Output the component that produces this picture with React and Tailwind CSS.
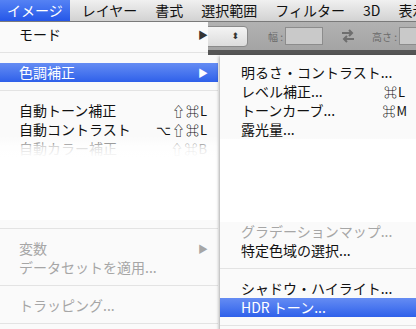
import React from 'react';

const font = "font-['Noto_Sans_CJK_JP','DejaVu_Sans',sans-serif]";

const Sep = () => (
    <div className="h-[19px] pt-[8px]">
        <div className="h-px bg-[#e3e3e3]"></div>
    </div>
);

const Row = ({ label, shortcut, arrow, disabled, active, pl = 'pl-[19px]', pr = 'pr-[10px]' }) => (
    <div
        className={`h-[19px] flex items-center justify-between ${pl} ${pr} text-[14px] leading-[19px] ${
            active
                ? 'bg-gradient-to-b from-[#658cf3] to-[#2f60ea] text-white'
                : disabled
                ? 'text-[#a6a6a6]'
                : 'text-[#111]'
        }`}
    >
        <span className="whitespace-nowrap">{label}</span>
        {shortcut && <span className="whitespace-nowrap text-[13px] tracking-[1px]">{shortcut}</span>}
        {arrow && (
            <span className={`text-[10px] ${active ? 'text-white' : disabled ? 'text-[#a6a6a6]' : 'text-[#333]'}`}>▶</span>
        )}
    </div>
);

const App = () => {
    const bar = ['レイヤー', '書式', '選択範囲', 'フィルター', '3D', '表示'];

    return (
        <div className={`relative w-[416px] h-[329px] overflow-hidden bg-white ${font}`}>
            {/* --- MENU BAR --- */}
            <div className="h-[22px] flex items-stretch bg-gradient-to-b from-[#f0f0f0] to-[#d2d2d2] border-b border-[#7a7a7a] text-[14px] text-[#111] whitespace-nowrap">
                <div className="shrink-0 px-[7px] flex items-center bg-gradient-to-b from-[#5582f4] to-[#2556e8] text-white">イメージ</div>
                <div className="flex items-center gap-[18px] pl-[12px]">
                    {bar.map((b) => (
                        <span key={b} className="shrink-0">{b}</span>
                    ))}
                </div>
            </div>

            {/* --- OPTIONS BAR --- */}
            <div className="h-[28px] flex items-center bg-gradient-to-b from-[#b2b2b2] to-[#a4a4a4] pl-[150px] text-[10px] text-[#6a6a6a] whitespace-nowrap">
                <div className="shrink-0 w-[98px] h-[21px] rounded-[4px] bg-gradient-to-b from-[#f4f4f4] to-[#dcdcdc] border border-[#8a8a8a] flex items-center justify-end pr-[8px] text-[9px] text-[#333]">
                    ⬍
                </div>
                <span className="shrink-0 ml-[20px] w-[17px]">幅 :</span>
                <div className="shrink-0 w-[38px] h-[18px] bg-[#c9c9c9] border border-[#8c8c8c]"></div>
                <svg className="shrink-0 ml-[17px]" width="16" height="14" viewBox="0 0 16 14">
                    <path d="M2 4h10M9 1l3 3-3 3M14 10H4M7 7l-3 3 3 3" fill="none" stroke="#6e6e6e" strokeWidth="2" />
                </svg>
                <span className="shrink-0 ml-[16px] w-[27px]">高さ :</span>
                <div className="shrink-0 w-[30px] h-[18px] bg-[#c9c9c9] border border-[#8c8c8c]"></div>
            </div>
            <div className="h-[5px] bg-[#565656]"></div>

            {/* --- MAIN MENU --- */}
            <div className="absolute left-0 top-[22px] w-[218px] h-[320px] bg-[#fafafa] pt-[3px] shadow-[1px_0_2px_rgba(0,0,0,0.35)] [clip-path:polygon(0_0,208px_0,208px_33px,100%_33px,100%_100%,0_100%)]">
                <Row label="モード" arrow />
                <Sep />
                <Row label="色調補正" arrow active />
                <Sep />
                <Row label="自動トーン補正" shortcut="⇧⌘L" />
                <Row label="自動コントラスト" shortcut="⌥⇧⌘L" />
                <Row label="自動カラー補正" shortcut="⇧⌘B" />
                <div className="h-[62px] bg-white"></div>
                <Sep />
                <Row label="変数" arrow disabled />
                <Row label="データセットを適用..." disabled />
                <Sep />
                <Row label="トラッピング..." disabled />
                <Sep />
                <div className="absolute left-0 right-0 top-[114px] h-[22px] bg-gradient-to-b from-white/0 via-white/85 to-white"></div>
                <div className="absolute left-0 right-0 top-[136px] h-[62px] bg-white"></div>
            </div>

            {/* --- ADJUSTMENTS SUBMENU --- */}
            <div className="absolute left-[220px] top-[55px] w-[200px] h-[280px] bg-[#fafafa] pt-[8px] shadow-[-1px_1px_3px_rgba(0,0,0,0.35)]">
                <Row label="明るさ・コントラスト..." pl="pl-[21px]" pr="pr-[14px]" />
                <Row label="レベル補正..." shortcut="⌘L" pl="pl-[21px]" pr="pr-[14px]" />
                <Row label="トーンカーブ..." shortcut="⌘M" pl="pl-[21px]" pr="pr-[12px]" />
                <Row label="露光量..." pl="pl-[21px]" pr="pr-[14px]" />
                <div className="h-[83px] bg-white"></div>
                <Row label="グラデーションマップ..." disabled pl="pl-[21px]" pr="pr-[14px]" />
                <Row label="特定色域の選択..." pl="pl-[21px]" pr="pr-[14px]" />
                <Sep />
                <Row label="シャドウ・ハイライト..." pl="pl-[21px]" pr="pr-[14px]" />
                <Row label="HDR トーン..." active pl="pl-[21px]" pr="pr-[14px]" />
                <Sep />
                <div className="absolute left-0 right-0 top-[82px] h-[20px] bg-gradient-to-b from-white/0 via-white/85 to-white"></div>
            </div>
        </div>
    );
};

export default App;
